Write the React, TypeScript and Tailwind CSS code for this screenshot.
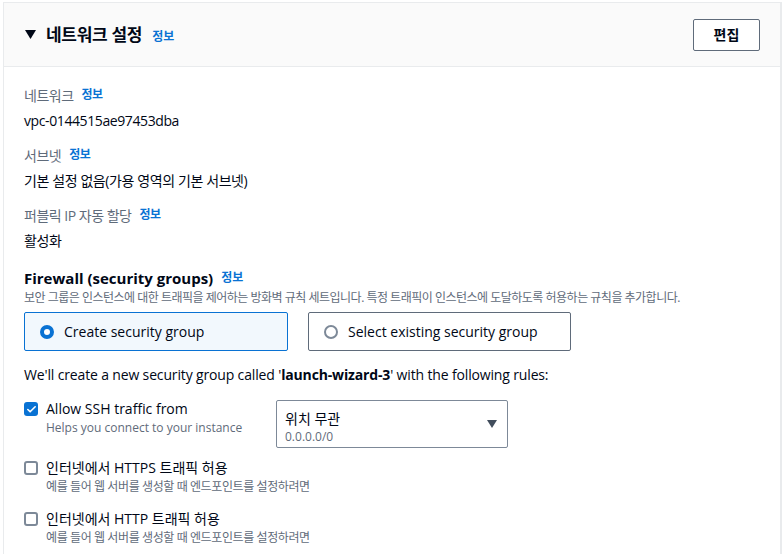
import { Check } from "lucide-react";

const font = { fontFamily: '"Open Sans", "Noto Sans CJK KR", sans-serif' };

function Info() {
  return <span className="ml-2 text-[12px] font-bold text-[#0972d3]">정보</span>;
}

function Field({ label, value }: { label: string; value: string }) {
  return (
    <div className="flex flex-col">
      <div className="flex items-center h-[20px] text-[14px] text-[#5f6b7a] tracking-[-0.5px]">
        {label}
        <Info />
      </div>
      <div className="mt-[6px] h-[20px] text-[14px] text-[#000716] leading-[20px] tracking-[-0.4px]">{value}</div>
    </div>
  );
}

function Box({ checked }: { checked?: boolean }) {
  return checked ? (
    <span className="flex h-[14px] w-[14px] shrink-0 items-center justify-center rounded-[3px] bg-[#0972d3]">
      <Check size={11} strokeWidth={3.5} color="white" />
    </span>
  ) : (
    <span className="block h-[14px] w-[14px] shrink-0 rounded-[3px] border-2 border-[#7d8998] bg-white" />
  );
}

function Rule({ checked, title, desc, ko }: { checked?: boolean; title: string; desc: string; ko?: boolean }) {
  return (
    <div className="flex items-start gap-[8px]">
      <div className="pt-[3px]">
        <Box checked={checked} />
      </div>
      <div className="flex flex-col">
        <span className="text-[14px] leading-[20px] text-[#000716]">{title}</span>
        <span className={`mt-[1px] text-[12px] leading-[16px] text-[#5f6b7a] ${ko ? "tracking-[-0.4px]" : ""}`}>{desc}</span>
      </div>
    </div>
  );
}

export default function App() {
  return (
    <div className="w-[784px] h-[554px] overflow-hidden bg-white pt-[2px] pl-[3px]" style={font}>
      <div className="w-[779px] h-[560px] border-l border-t border-r-2 border-[#e9ebed] bg-white">
        <div className="flex h-[64px] items-center justify-between border-b border-[#e9ebed] bg-[#fafafa] pl-[21px] pr-[20px]">
          <div className="flex items-center">
            <svg width="11" height="9" viewBox="0 0 11 9" className="mr-[10px]">
              <path d="M0 0 L11 0 L5.5 9 Z" fill="#000716" />
            </svg>
            <span className="text-[17px] font-bold text-[#000716] tracking-[-0.3px]">네트워크 설정</span>
            <span className="ml-[2px]"><Info /></span>
          </div>
          <button className="h-[32px] w-[67px] rounded-[2px] border border-[#5f6b7a] bg-white text-[14px] font-bold text-[#000716]">
            편집
          </button>
        </div>

        <div className="flex flex-col pl-[20px] pt-[18px]">
          <div className="flex flex-col gap-[14px]">
            <Field label="네트워크" value="vpc-0144515ae97453dba" />
            <Field label="서브넷" value="기본 설정 없음(가용 영역의 기본 서브넷)" />
            <Field label="퍼블릭 IP 자동 할당" value="활성화" />
          </div>

          <div className="mt-[16px] flex items-center h-[22px]">
            <span className="text-[15px] font-bold text-[#000716]">Firewall (security groups)</span>
            <Info />
          </div>
          <div className="mt-[1px] text-[12px] leading-[16px] text-[#5f6b7a] tracking-[-0.5px]">
            보안 그룹은 인스턴스에 대한 트래픽을 제어하는 방화벽 규칙 세트입니다. 특정 트래픽이 인스턴스에 도달하도록 허용하는 규칙을 추가합니다.
          </div>

          <div className="mt-[6px] flex gap-[20px]">
            <div className="flex h-[39px] w-[264px] items-center gap-[10px] rounded-[2px] border border-[#0972d3] bg-[#f2f8fd] pl-[15px]">
              <span className="h-[14px] w-[14px] rounded-full border-[4px] border-[#0972d3] bg-white" />
              <span className="text-[14px] text-[#000716]">Create security group</span>
            </div>
            <div className="flex h-[39px] w-[263px] items-center gap-[10px] rounded-[2px] border border-[#5f6b7a] bg-white pl-[15px]">
              <span className="h-[14px] w-[14px] rounded-full border-2 border-[#7d8998] bg-white" />
              <span className="text-[14px] text-[#000716]">Select existing security group</span>
            </div>
          </div>

          <div className="mt-[14px] text-[14px] leading-[20px] text-[#000716] tracking-[-0.15px]">
            We&apos;ll create a new security group called &apos;<span className="font-bold">launch-wizard-3</span>&apos; with the following rules:
          </div>

          <div className="mt-[14px] flex items-start">
            <div className="w-[252px]">
              <Rule checked title="Allow SSH traffic from" desc="Helps you connect to your instance" />
            </div>
            <div className="mt-[1px] flex h-[48px] w-[232px] items-center justify-between rounded-[2px] border border-[#7d8998] bg-white pl-[8px] pr-[10px]">
              <div className="flex flex-col pt-[5px]">
                <span className="text-[14px] leading-[20px] text-[#000716]">위치 무관</span>
                <span className="text-[12px] leading-[16px] text-[#5f6b7a]">0.0.0.0/0</span>
              </div>
              <svg width="10" height="8" viewBox="0 0 10 8">
                <path d="M0 0 L10 0 L5 8 Z" fill="#414d5c" />
              </svg>
            </div>
          </div>

          <div className="mt-[10px]">
            <Rule ko title="인터넷에서 HTTPS 트래픽 허용" desc="예를 들어 웹 서버를 생성할 때 엔드포인트를 설정하려면" />
          </div>
          <div className="mt-[14px]">
            <Rule ko title="인터넷에서 HTTP 트래픽 허용" desc="예를 들어 웹 서버를 생성할 때 엔드포인트를 설정하려면" />
          </div>
        </div>
      </div>
    </div>
  );
}
